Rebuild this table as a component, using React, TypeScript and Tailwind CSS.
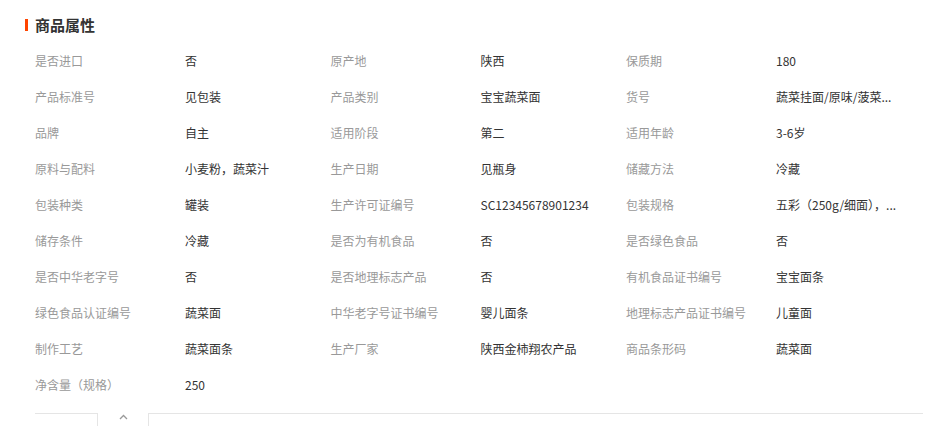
import React from "react";

const rows: [string, string][][] = [
  [["是否进口", "否"], ["原产地", "陕西"], ["保质期", "180"]],
  [["产品标准号", "见包装"], ["产品类别", "宝宝蔬菜面"], ["货号", "蔬菜挂面/原味/菠菜..."]],
  [["品牌", "自主"], ["适用阶段", "第二"], ["适用年龄", "3-6岁"]],
  [["原料与配料", "小麦粉，蔬菜汁"], ["生产日期", "见瓶身"], ["储藏方法", "冷藏"]],
  [["包装种类", "罐装"], ["生产许可证编号", "SC12345678901234"], ["包装规格", "五彩（250g/细面），..."]],
  [["储存条件", "冷藏"], ["是否为有机食品", "否"], ["是否绿色食品", "否"]],
  [["是否中华老字号", "否"], ["是否地理标志产品", "否"], ["有机食品证书编号", "宝宝面条"]],
  [["绿色食品认证编号", "蔬菜面"], ["中华老字号证书编号", "婴儿面条"], ["地理标志产品证书编号", "儿童面"]],
  [["制作工艺", "蔬菜面条"], ["生产厂家", "陕西金柿翔农产品"], ["商品条形码", "蔬菜面"]],
  [["净含量（规格）", "250"]],
];

export default function App() {
  return (
    <div
      className="w-[946px] h-[426px] bg-white overflow-hidden relative"
      style={{ fontFamily: '"Noto Sans CJK SC", "Noto Sans", sans-serif' }}
    >
      <div className="flex items-center h-[20px] mt-[15px] pl-[25px]">
        <div className="w-[3px] h-[12px] bg-[#ff4400]" />
        <div className="ml-[7px] text-[15px] font-bold text-[#333] leading-[20px]">商品属性</div>
      </div>
      <div className="mt-[8px] pl-[35px]">
        {rows.map((row, i) => (
          <div key={i} className="flex h-[36px] items-center text-[12px] leading-[16px]">
            {row.map(([k, v], j) => (
              <div key={j} className="flex w-[295.5px] shrink-0">
                <div className="w-[150px] shrink-0 text-[#999]">{k}</div>
                <div className="whitespace-nowrap text-[#333]">{v}</div>
              </div>
            ))}
          </div>
        ))}
      </div>
      <div className="flex mt-[10px] pl-[35px] h-[13px]">
        <div className="w-[63px] border-t border-r border-[#e5e5e5]" />
        <div className="w-[50px] flex justify-center pt-[1px]">
          <svg width="9" height="6" viewBox="0 0 9 6" fill="none">
            <path d="M1 5 L4.5 1.5 L8 5" stroke="#999" strokeWidth="1.3" />
          </svg>
        </div>
        <div className="w-[775px] border-t border-l border-[#e5e5e5]" />
      </div>
    </div>
  );
}
